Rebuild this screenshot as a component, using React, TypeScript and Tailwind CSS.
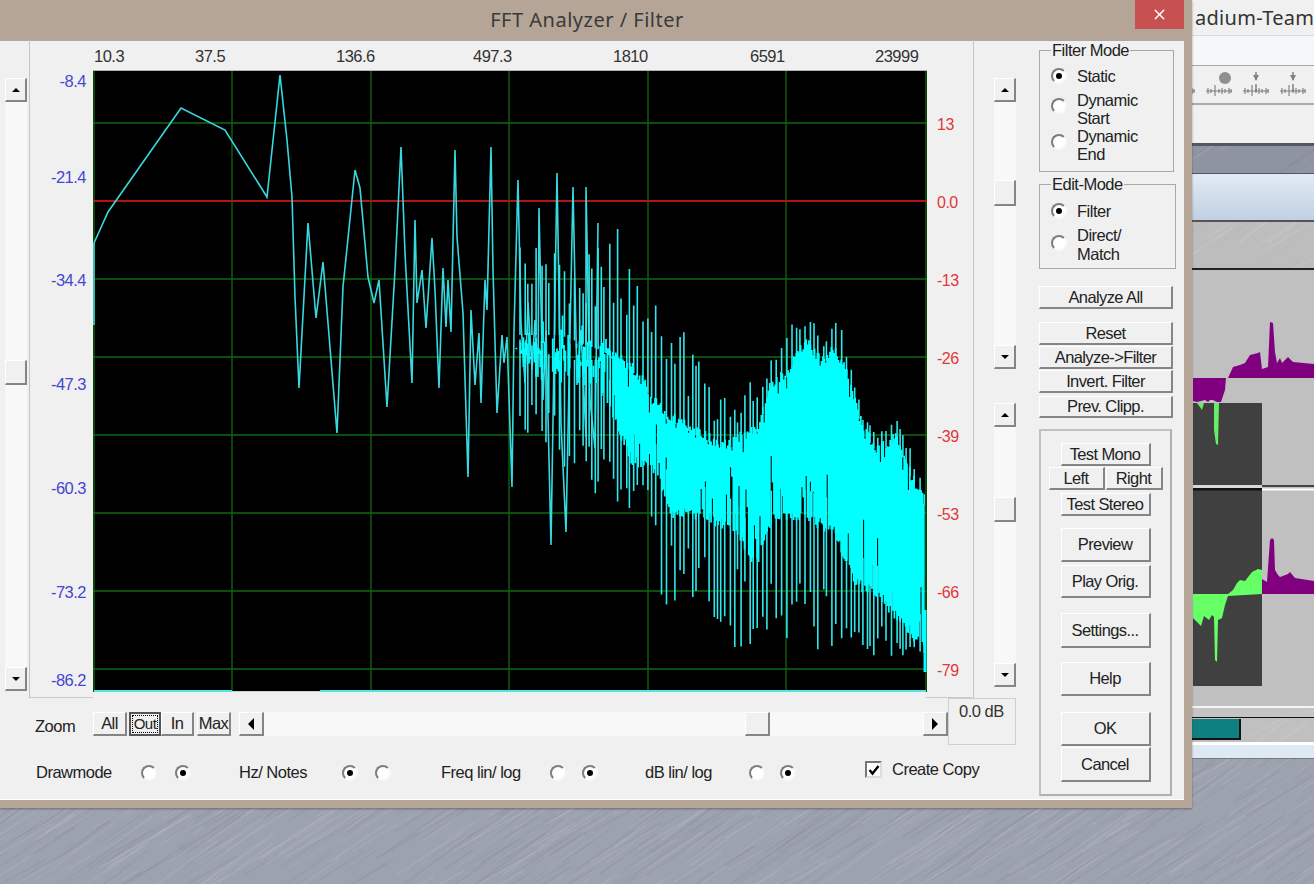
import React from 'react'
import { X } from 'lucide-react'

type Pt = [number, number]

const rng = (seed: number) => () => {
  seed = (seed * 16807) % 2147483647
  return (seed - 1) / 2147483646
}

const lerp = (pts: Pt[], x: number) => {
  if (x <= pts[0][0]) return pts[0][1]
  for (let i = 1; i < pts.length; i++) {
    if (x <= pts[i][0]) {
      const [x0, y0] = pts[i - 1]
      const [x1, y1] = pts[i]
      return y0 + ((y1 - y0) * (x - x0)) / (x1 - x0)
    }
  }
  return pts[pts.length - 1][1]
}

// 频谱前段：稀疏折线
const sparse: Pt[] = [
  [94, 243], [108, 212], [181, 108], [225, 130], [267, 197], [280, 75], [287, 140], [292, 197], [295, 297], [299, 388],
  [308, 223], [316, 318], [323, 262], [337, 433], [343, 287], [355, 170], [360, 188], [368, 277], [374, 303], [379, 280],
  [387, 407], [395, 270], [401, 147], [405, 253], [412, 383], [415, 220], [417, 303], [422, 270], [426, 328], [432, 238],
  [435, 290], [439, 388], [443, 268], [446, 327], [448, 280], [451, 332], [455, 150], [457, 237], [463, 313], [468, 477],
  [471, 310], [475, 385], [479, 333], [481, 403], [485, 280], [487, 310], [491, 147], [493, 270], [497, 413], [502, 335],
  [504, 363], [507, 337], [512, 487], [514, 330], [518, 180], [521, 323], [525, 383], [528, 302], [532, 370], [535, 320],
  [538, 377], [539, 208], [543, 400], [546, 330], [551, 545], [557, 173], [561, 423], [566, 532], [573, 187], [577, 385],
  [581, 330], [586, 437], [586, 187], [590, 400], [595, 448], [598, 223],
]

const bandTop: Pt[] = [
  [515, 325], [560, 325], [600, 340], [633, 362], [667, 410], [700, 427], [723, 440], [757, 423], [770, 380], [787, 367],
  [807, 333], [822, 357], [833, 342], [847, 367], [863, 423], [877, 443], [897, 430], [907, 460], [925, 497],
]
const bandBot: Pt[] = [
  [515, 372], [560, 395], [600, 395], [617, 430], [633, 470], [650, 465], [673, 520], [700, 520], [733, 535], [757, 570],
  [773, 520], [807, 525], [833, 535], [857, 590], [877, 600], [900, 625], [925, 655],
]
const spikeTop: Pt[] = [
  [600, 205], [625, 235], [640, 258], [670, 320], [687, 330], [708, 385], [717, 398], [740, 395], [747, 372], [760, 385],
  [775, 352], [785, 322], [813, 320], [825, 345], [832, 322], [840, 322], [848, 355], [858, 388], [863, 420], [883, 428],
  [898, 418], [903, 433], [917, 458], [925, 497],
]
const spikeBot: Pt[] = [
  [515, 420], [600, 505], [623, 515], [652, 540], [666, 620], [692, 600], [719, 632], [740, 652], [753, 657], [769, 648],
  [800, 635], [820, 660], [848, 652], [874, 660], [904, 657], [925, 652],
]

const buildDense = () => {
  const r = rng(4711)
  let band = ''
  let comb = ''
  for (let x = 515; x <= 925; x += 1.4) {
    const t = lerp(bandTop, x)
    const b = lerp(bandBot, x)
    if (x < 600 && r() < 0.3) continue
    const notch = r() < 0.16 ? 20 + r() * 55 : r() * 12
    const yTop = t + r() * 12 + (x < 600 ? r() * 24 : r() < 0.12 ? r() * 22 : 0)
    const yBot = b - notch - (x < 600 ? r() * 24 : 0)
    band += `M${x.toFixed(1)} ${yTop.toFixed(1)}V${yBot.toFixed(1)}`
  }
  for (let x = 520; x <= 925; x += 2.5 + r() * 3.5) {
    const up = lerp(spikeTop, x)
    const t = lerp(bandTop, x)
    const rise = x < 600 ? 0.3 + r() * 0.5 : Math.pow(r(), 1.6) * 0.75
    comb += `M${x.toFixed(1)} ${(up + (t - up) * rise).toFixed(1)}V${(t + 10).toFixed(1)}`
    const dn = lerp(spikeBot, x)
    const b = lerp(bandBot, x)
    comb += `M${x.toFixed(1)} ${(b - 35).toFixed(1)}V${(b + (dn - b) * (0.25 + r() * 0.75)).toFixed(1)}`
  }
  return { band, comb }
}

const dense = buildDense()
const vGrid = [94, 232, 371, 509, 648, 786, 926]
const hGrid = [123, 279, 357, 435, 513, 591, 669]

const Spectrum = () => (
  <svg viewBox="93 71 834 621" className="block w-[834px] h-[621px] bg-black">
    {vGrid.map(x => (
      <line key={x} x1={x} y1={71} x2={x} y2={692} stroke="#0f6a0f" strokeWidth={1.3} />
    ))}
    {hGrid.map(y => (
      <line key={y} x1={93} y1={y} x2={927} y2={y} stroke="#0f6a0f" strokeWidth={1.3} />
    ))}
    <line x1={93} y1={201} x2={927} y2={201} stroke="#b01414" strokeWidth={2} />
    <line x1={94} y1={243} x2={94} y2={325} stroke="#3fd8dc" strokeWidth={1.6} />
    <polyline points={sparse.map(p => p.join(',')).join(' ')} fill="none" stroke="#38d8e0" strokeWidth={1.6} />
    <path d={dense.comb} fill="none" stroke="#2ce8ec" strokeWidth={1.6} />
    <path d={dense.band} fill="none" stroke="#00ffff" strokeWidth={1.8} />
    <path d="M925 610V672" stroke="#00ffff" strokeWidth={3} />
    <path d="M94 691H232M320 691H926" stroke="#4fe6e6" strokeWidth={2} />
    <path d="M232 691.6H320" stroke="#d8e8e8" strokeWidth={1} />
  </svg>
)

// 背景纹理
const Texture = ({ w, h, seed, light, dark }: { w: number; h: number; seed: number; light: string; dark: string }) => {
  const r = rng(seed)
  const count = Math.round((w * h) / 200)
  const strokes = Array.from({ length: count }, (_, i) => {
    const x = r() * (w + 80) - 40
    const y = r() * (h + 40) - 20
    const len = 25 + r() * 70
    return (
      <line
        key={i}
        x1={x}
        y1={y}
        x2={x + len}
        y2={y - len * (0.55 + r() * 0.2)}
        stroke={r() < 0.55 ? light : dark}
        strokeWidth={0.6 + r() * 1.4}
        opacity={0.35}
      />
    )
  })
  return (
    <svg viewBox={`0 0 ${w} ${h}`} className="absolute inset-0 w-full h-full blur-[0.6px]">
      {strokes}
    </svg>
  )
}

const raised =
  'bg-[#f0f0f0] border-t border-l border-r-2 border-b-2 border-t-white border-l-white border-r-[#858585] border-b-[#858585]'

const Btn = ({ className, children }: { className: string; children: React.ReactNode }) => (
  <div className={`${raised} flex items-center justify-center shrink-0 text-[16.5px] tracking-[-0.6px] text-[#222] whitespace-nowrap ${className}`}>
    {children}
  </div>
)

const Arrow = ({ dir }: { dir: 'up' | 'down' | 'left' | 'right' }) => {
  const pts = {
    up: '0,5 8,5 4,1',
    down: '0,1 8,1 4,5',
    left: '6,0 6,12 0,6',
    right: '0,0 0,12 6,6',
  }[dir]
  const horiz = dir === 'left' || dir === 'right'
  return (
    <svg viewBox={horiz ? '0 0 6 12' : '0 0 8 6'} className={horiz ? 'w-[6px] h-[12px]' : 'w-[8px] h-[6px]'}>
      <polygon points={pts} fill="#000" />
    </svg>
  )
}

const ArrowBtn = ({ dir }: { dir: 'up' | 'down' }) => (
  <Btn className="w-[22px] h-[24px]">
    <Arrow dir={dir} />
  </Btn>
)

const Thumb = () => <Btn className="w-[22px] h-[25px]">{null}</Btn>

const Radio = ({ on, className = '' }: { on?: boolean; className?: string }) => (
  <span
    className={`w-4 h-4 shrink-0 rounded-full bg-white border-2 border-t-[#7d7d7d] border-l-[#7d7d7d] border-r-[#f8f8f8] border-b-[#f8f8f8] flex items-center justify-center ${className}`}
  >
    {on && <span className="w-[6px] h-[6px] rounded-full bg-black" />}
  </span>
)

const Waves = () => (
  <svg viewBox="1192 270 122 436" className="absolute inset-0 w-full h-full">
    <rect x={1193} y={403} width={69} height={283} fill="#404040" />
    <rect x={1193} y={485} width={69} height={3} fill="#d8d8d8" />
    <rect x={1193} y={488} width={69} height={2.5} fill="#111" />
    <rect x={1262} y={485} width={52} height={2} fill="#444" />
    <rect x={1262} y={488.5} width={52} height={2} fill="#fff" />
    <polygon
      fill="#800080"
      points="1228,378 1233,367 1240,365 1245,363 1250,355 1258,353 1260,352 1262,369 1268,367 1270,322 1273,323 1275,352 1277,363 1280,358 1282,363 1288,357 1293,362 1314,364 1314,378"
    />
    <polygon
      fill="#800080"
      points="1193,378 1226,378 1225,390 1221,402 1217,402 1213,400 1210,400 1208,402 1205,400 1197,402 1193,401"
    />
    <polygon fill="#66ee66" points="1197,403 1204,403 1202,410" />
    <polygon fill="#66ee66" points="1214,403 1219,403 1218,445 1216,444 1214,430" />
    <polygon
      fill="#66ff66"
      points="1193,594 1228,594 1233,590 1237,583 1240,580 1245,581 1252,572 1258,569 1262,570 1262,594 1228,596 1225,605 1222,618 1218,620 1217,662 1215,660 1214,617 1212,615 1209,620 1204,616 1201,626 1193,618"
    />
    <polygon
      fill="#800080"
      points="1262,594 1262,579 1267,582 1270,540 1272,538 1274,540 1275,570 1278,575 1280,577 1288,574 1290,572 1295,578 1314,581 1314,594"
    />
  </svg>
)

const ToolGlyph = ({ top }: { top: 'dot' | 'arrow' }) => (
  <svg viewBox="0 0 28 28" className="w-[28px] h-[28px] shrink-0">
    {top === 'dot' ? (
      <circle cx={20} cy={6} r={6} fill="#8f8f8f" />
    ) : (
      <>
        <path d="M14 0V8M14 12V20" stroke="#808080" strokeWidth={1.5} />
        <polygon points="11,3 17,3 14,9" fill="#808080" />
      </>
    )}
    <path
      d="M1 19H27M3 16V22M6 17V21M10 13V24M14 17V21M17 16V22M20 17V21M24 16V22M26 17V21"
      stroke="#7c7c7c"
      strokeWidth={1.1}
      fill="none"
    />
  </svg>
)

const BackWindow = () => (
  <div className="absolute left-[1192px] top-0 w-[122px] h-[759px] flex flex-col overflow-hidden border-b border-b-[#777]">
    <div className="h-[35px] shrink-0 bg-[#f0f0f0] pl-[3px] text-[20px] leading-[36px] tracking-[0.3px] text-[#333] whitespace-nowrap font-['Noto_Sans',sans-serif]">
      adium-Team
    </div>
    <div className="h-[31px] shrink-0 bg-[#f6f7f9] border-t border-b border-t-[#dcdcdc] border-b-[#a9a9a9]" />
    <div className="h-[39px] shrink-0 bg-[#f0f0f0] border-b-2 border-b-[#aaaaaa] flex items-center -ml-[24px] gap-[9px] pt-[2px]">
      <ToolGlyph top="arrow" />
      <ToolGlyph top="dot" />
      <ToolGlyph top="arrow" />
      <ToolGlyph top="arrow" />
    </div>
    <div className="h-[38px] shrink-0 bg-[#f0f0f0]" />
    <div className="relative h-[31px] shrink-0 bg-[#8f94a3] border-t-[3px] border-b border-t-[#55575f] border-b-[#55575f] overflow-hidden">
      <Texture w={122} h={27} seed={77} light="#a8acb8" dark="#7f8392" />
    </div>
    <div className="h-[46px] shrink-0 bg-gradient-to-b from-[#e2ebf4] to-[#c0d0e2]" />
    <div className="relative h-[50px] shrink-0 bg-[#bdbdbd] border-t-2 border-b-2 border-t-[#555] border-b-[#222] overflow-hidden">
      <Texture w={122} h={46} seed={99} light="#cfcfcf" dark="#b0b0b0" />
    </div>
    <div className="relative h-[436px] shrink-0 bg-[#c0c0c0]">
      <Waves />
    </div>
    <div className="relative h-[12px] shrink-0 bg-[#c4c4c4] border-t-2 border-b-[1.5px] border-t-[#f4f4f4] border-b-[#111] overflow-hidden">
      <Texture w={122} h={9} seed={123} light="#d6d6d6" dark="#b2b2b2" />
    </div>
    <div className="relative h-[24px] shrink-0 bg-[#c0c0c0] overflow-hidden">
      <Texture w={122} h={24} seed={211} light="#d2d2d2" dark="#aeaeae" />
      <div className="relative w-[49px] h-[21px] mt-[1px] bg-[#0f8080] border-r-2 border-b-2 border-r-[#111] border-b-[#111]" />
    </div>
    <div className="h-[16px] shrink-0 bg-[#dfe9f3] border-t-[3px] border-t-white" />
  </div>
)

const freqLabels = (
  <div className="h-[32px] pt-[3px] flex items-center text-[16.5px] tracking-[-0.5px] text-[#333] whitespace-nowrap border-b-2 border-b-[#b4b4b4]">
    <span className="ml-[1px] w-[31px]">10.3</span>
    <span className="ml-[70px] w-[32px]">37.5</span>
    <span className="ml-[109px] w-[39px]">136.6</span>
    <span className="ml-[98px] w-[40px]">497.3</span>
    <span className="ml-[100px] w-[35px]">1810</span>
    <span className="ml-[102px] w-[36px]">6591</span>
    <span className="ml-[89px] w-[45px]">23999</span>
  </div>
)

const RedLabel = ({ children }: { children: React.ReactNode }) => (
  <div className="h-[78px] pl-[11px] flex items-center text-[16px] tracking-[-0.5px] text-[#e03838]">{children}</div>
)

const BlueLabel = ({ className, children }: { className: string; children: React.ReactNode }) => (
  <div className={`pr-[7px] text-right text-[16.5px] tracking-[-0.5px] leading-[20px] h-[20px] text-[#4646d2] ${className}`}>{children}</div>
)

const App = () => (
  <div className="relative w-[1314px] h-[884px] overflow-hidden bg-[#9da2af] font-['Liberation_Sans',Arial,sans-serif]">
    <Texture w={1314} h={884} seed={31} light="#b3b7c3" dark="#8d919f" />
    <BackWindow />

    {/* dialog */}
    <div className="absolute left-0 top-0 w-[1192px] h-[808px] bg-[#b5a596] shadow-[0_1px_2px_rgba(60,50,40,0.5)]">
      <div className="relative h-[40px] w-[1184px]">
        <div className="w-[1174px] pt-[6px] text-center text-[20px] tracking-[0.5px] leading-[28px] text-[#3a3a3a] font-['Noto_Sans',sans-serif]">
          FFT Analyzer / Filter
        </div>
        <div className="absolute right-0 top-0 w-[49px] h-[29px] bg-[#c75050] flex items-center justify-center">
          <X size={17} color="#fff" strokeWidth={2} />
        </div>
      </div>

      <div className="w-[1184px] h-[760px] flex bg-[#f0f0f0] border-b border-b-white shadow-[inset_0_1px_0_#a8a8a8]">
        {/* left and centre */}
        <div className="w-[1030px] shrink-0 flex flex-col">
          <div className="h-[658px] flex shrink-0">
            <div className="w-[29px] shrink-0 pl-[5px] pt-[38px]">
              <div className="w-[22px] flex flex-col bg-[#f8f8f8]">
                <ArrowBtn dir="up" />
                <div className="h-[258px]" />
                <Thumb />
                <div className="h-[282px]" />
                <ArrowBtn dir="down" />
              </div>
            </div>

            <div className="w-[945px] shrink-0 flex border-l border-r border-l-[#c4c4c4] border-r-[#c4c4c4]">
              <div className="w-[63px] shrink-0 border-b border-b-[#c8c8c8] pt-[31px]">
                <BlueLabel className="">-8.4</BlueLabel>
                <BlueLabel className="mt-[76px]">-21.4</BlueLabel>
                <BlueLabel className="mt-[83px]">-34.4</BlueLabel>
                <BlueLabel className="mt-[84px]">-47.3</BlueLabel>
                <BlueLabel className="mt-[84px]">-60.3</BlueLabel>
                <BlueLabel className="mt-[84px]">-73.2</BlueLabel>
                <BlueLabel className="mt-[68px]">-86.2</BlueLabel>
              </div>
              <div className="w-[834px] shrink-0">
                {freqLabels}
                <div className="-mt-px">
                  <Spectrum />
                </div>
              </div>
              <div className="w-[46px] shrink-0 border-b border-b-[#c8c8c8] pt-[46px] -ml-[1px]">
                <RedLabel>13</RedLabel>
                <RedLabel>0.0</RedLabel>
                <RedLabel>-13</RedLabel>
                <RedLabel>-26</RedLabel>
                <RedLabel>-39</RedLabel>
                <RedLabel>-53</RedLabel>
                <RedLabel>-66</RedLabel>
                <RedLabel>-79</RedLabel>
              </div>
            </div>

            <div className="pl-[20px] pt-[38px]">
              <div className="w-[22px] flex flex-col bg-[#f8f8f8]">
                <ArrowBtn dir="up" />
                <div className="h-[78px]" />
                <Btn className="w-[22px] h-[26px]">{null}</Btn>
                <div className="h-[139px]" />
                <ArrowBtn dir="down" />
              </div>
              <div className="mt-[34px] w-[22px] flex flex-col bg-[#f8f8f8]">
                <ArrowBtn dir="up" />
                <div className="h-[70px]" />
                <Thumb />
                <div className="h-[141px]" />
                <ArrowBtn dir="down" />
              </div>
            </div>
          </div>

          {/* zoom row */}
          <div className="h-[47px] shrink-0 flex items-start text-[16.5px] tracking-[-0.5px] text-[#222]">
            <span className="ml-[35px] w-[58px] mt-[18px] leading-[20px]">Zoom</span>
            <Btn className="w-[34px] h-[24px] mt-[14px]">All</Btn>
            <div className="ml-[2px] mt-[14px] w-[32px] h-[24px] shrink-0 flex items-center justify-center bg-[#f0f0f0] border-2 border-[#555]">
              <span className="border border-dotted border-black leading-[16px] text-[15px] px-[1px]">Out</span>
            </div>
            <Btn className="w-[33px] h-[24px] mt-[14px]">In</Btn>
            <Btn className="ml-[3px] w-[34px] h-[24px] mt-[14px]">Max</Btn>
            <div className="ml-[8px] mt-[14px] w-[709px] h-[24px] flex bg-[#f8f8f8]">
              <Btn className="w-[25px] h-[24px]">
                <Arrow dir="left" />
              </Btn>
              <div className="w-[481px]" />
              <Btn className="w-[25px] h-[24px]">{null}</Btn>
              <div className="w-[153px]" />
              <Btn className="w-[25px] h-[24px]">
                <Arrow dir="right" />
              </Btn>
            </div>
            <div className="w-[68px] h-[47px] shrink-0 border border-[#cfcfcf] pl-[10px] pt-[2px] leading-[20px] text-[#333]">0.0 dB</div>
          </div>

          {/* options row */}
          <div className="h-[55px] shrink-0 flex items-center text-[16.5px] tracking-[-0.5px] text-[#222] whitespace-nowrap">
            <span className="ml-[36px] w-[105px]">Drawmode</span>
            <Radio />
            <Radio on className="ml-[18px]" />
            <span className="ml-[48px] w-[103px]">Hz/ Notes</span>
            <Radio on />
            <Radio className="ml-[17px]" />
            <span className="ml-[50px] w-[109px]">Freq lin/ log</span>
            <Radio />
            <Radio on className="ml-[16px]" />
            <span className="ml-[47px] w-[104px]">dB lin/ log</span>
            <Radio />
            <Radio on className="ml-[15px]" />
            <span className="ml-[69px] w-[17px] h-[17px] -mt-[6px] shrink-0 flex items-center justify-center bg-white border-2 border-t-[#777] border-l-[#777] border-r-[#ddd] border-b-[#ddd]">
              <svg viewBox="0 0 12 12" className="w-[12px] h-[12px]">
                <path d="M1.5 6 L4.5 9.5 L10.5 2" fill="none" stroke="#000" strokeWidth={2.4} />
              </svg>
            </span>
            <span className="ml-[10px] -mt-[6px]">Create Copy</span>
          </div>
        </div>

        {/* right panel */}
        <div className="w-[154px] shrink-0 pl-[9px] flex flex-col text-[16.5px] tracking-[-0.5px] text-[#222]">
          <fieldset className="mt-[1px] w-[135px] h-[131px] border border-[#a8a8a8] pl-[11px] pt-[8px]">
            <legend className="ml-0 px-[1px] leading-[18px]">Filter Mode</legend>
            <div className="flex items-center gap-[10px] h-[18px] leading-[18px]">
              <Radio on />
              <span>Static</span>
            </div>
            <div className="flex items-center gap-[10px] mt-[6px] leading-[18px]">
              <Radio className="-mt-[6px]" />
              <span>
                Dynamic
                <br />
                Start
              </span>
            </div>
            <div className="flex items-center gap-[10px] leading-[18px]">
              <Radio className="-mt-[6px]" />
              <span>
                Dynamic
                <br />
                End
              </span>
            </div>
          </fieldset>
          <fieldset className="mt-[3px] w-[137px] h-[94px] border border-[#a8a8a8] pl-[11px] pt-[9px]">
            <legend className="ml-0 px-[1px] leading-[18px]">Edit-Mode</legend>
            <div className="flex items-center gap-[10px] h-[18px] leading-[18px]">
              <Radio on />
              <span>Filter</span>
            </div>
            <div className="flex items-center gap-[10px] mt-[6px] leading-[19px]">
              <Radio className="-mt-[4px]" />
              <span>
                Direct/
                <br />
                Match
              </span>
            </div>
          </fieldset>

          <Btn className="mt-[17px] w-[134px] h-[23px]">Analyze All</Btn>
          <Btn className="mt-[13px] w-[134px] h-[23px]">Reset</Btn>
          <Btn className="mt-[1px] w-[134px] h-[23px]">{'Analyze->Filter'}</Btn>
          <Btn className="mt-[1px] w-[134px] h-[23px]">Invert. Filter</Btn>
          <Btn className="mt-[3px] w-[134px] h-[22px]">Prev. Clipp.</Btn>

          <div className="mt-[11px] w-[133px] h-[367px] border-2 border-[#b0b0b0] border-t-[#c0c0c0] border-l-[#c0c0c0] flex flex-col items-center">
            <Btn className="mt-[12px] w-[90px] h-[23px]">Test Mono</Btn>
            <div className="mt-[1px] flex gap-[1px]">
              <Btn className="w-[56px] h-[23px]">Left</Btn>
              <Btn className="w-[57px] h-[23px]">Right</Btn>
            </div>
            <Btn className="mt-[3px] w-[90px] h-[23px]">Test Stereo</Btn>
            <Btn className="mt-[12px] w-[90px] h-[34px]">Preview</Btn>
            <Btn className="mt-[3px] w-[90px] h-[33px]">Play Orig.</Btn>
            <Btn className="mt-[15px] w-[90px] h-[35px]">Settings...</Btn>
            <Btn className="mt-[14px] w-[90px] h-[34px]">Help</Btn>
            <Btn className="mt-[16px] w-[90px] h-[34px]">OK</Btn>
            <Btn className="mt-[1px] w-[90px] h-[35px]">Cancel</Btn>
          </div>
        </div>
      </div>
    </div>
  </div>
)

export default App
